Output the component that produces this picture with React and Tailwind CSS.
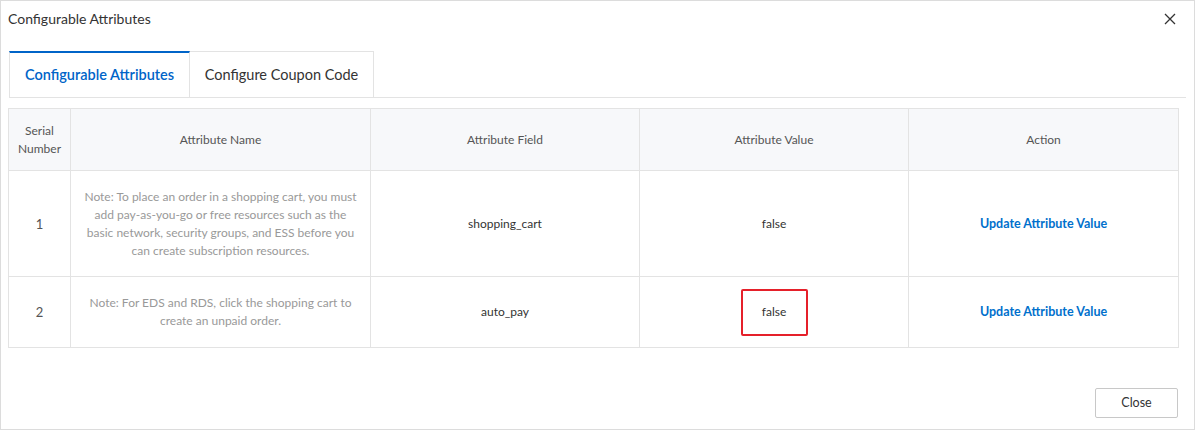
import React from "react";

const rows = [
  {
    id: 1,
    note: "Note: To place an order in a shopping cart, you must add pay-as-you-go or free resources such as the basic network, security groups, and ESS before you can create subscription resources.",
    field: "shopping_cart",
    value: "false",
  },
  {
    id: 2,
    note: "Note: For EDS and RDS, click the shopping cart to create an unpaid order.",
    field: "auto_pay",
    value: "false",
    marked: true,
  },
];

const App = () => {
  return (
    <div
      className="w-[1195px] h-[430px] bg-white border border-[#dcdcdc] relative text-[#333]"
      style={{ fontFamily: 'Lato, "Open Sans", sans-serif' }}
    >
      <div className="flex items-center justify-between h-[35px] pl-[7px] pr-[16px]">
        <span className="text-[14px] text-[#333]">Configurable Attributes</span>
        <svg width="12" height="12" viewBox="0 0 12 12" className="mr-[2px]">
          <path d="M1 1 L11 11 M11 1 L1 11" stroke="#333" strokeWidth="1.3" />
        </svg>
      </div>

      <div className="mt-[15px] ml-[8px] mr-[8px] flex border-b border-[#e3e3e3]">
        <div className="w-[181px] h-[46px] flex items-center justify-center border-t-2 border-[#0064c8] border-r border-l border-l-[#e3e3e3] border-r-[#e3e3e3] bg-white -mb-px text-[14.5px] font-semibold text-[#0064c8]">
          Configurable Attributes
        </div>
        <div className="w-[184px] h-[46px] flex items-center justify-center border-t border-r border-[#e3e3e3] text-[14.5px] text-[#333]">
          Configure Coupon Code
        </div>
      </div>

      <table className="mt-[10px] ml-[7px] w-[1170px] border-collapse text-[12px] leading-[18px] table-fixed">
        <colgroup>
          <col className="w-[62px]" />
          <col className="w-[300px]" />
          <col className="w-[269px]" />
          <col className="w-[269px]" />
          <col className="w-[270px]" />
        </colgroup>
        <thead>
          <tr className="h-[62px] bg-[#f7f8fa]">
            <th className="border border-[#e3e3e3] font-normal text-[#555] px-1">Serial Number</th>
            <th className="border border-[#e3e3e3] font-normal text-[#555]">Attribute Name</th>
            <th className="border border-[#e3e3e3] font-normal text-[#555]">Attribute Field</th>
            <th className="border border-[#e3e3e3] font-normal text-[#555]">Attribute Value</th>
            <th className="border border-[#e3e3e3] font-normal text-[#555]">Action</th>
          </tr>
        </thead>
        <tbody>
          {rows.map((r) => (
            <tr key={r.id} className={r.marked ? "h-[71px]" : "h-[106px]"}>
              <td className="border border-[#e3e3e3] text-center text-[#555] text-[13px]">{r.id}</td>
              <td className="border border-[#e3e3e3] text-center text-[#999] px-[10px]">{r.note}</td>
              <td className="border border-[#e3e3e3] text-center text-[#333]">{r.field}</td>
              <td className="border border-[#e3e3e3] text-center text-[#333]">
                {r.marked ? (
                  <span className="inline-flex items-center justify-center w-[67px] h-[47px] border-2 border-[#e5202a] rounded-[2px]">
                    {r.value}
                  </span>
                ) : (
                  r.value
                )}
              </td>
              <td className="border border-[#e3e3e3] text-center">
                <span className="text-[#0070cc] font-bold text-[12.5px]">Update Attribute Value</span>
              </td>
            </tr>
          ))}
        </tbody>
      </table>

      <div className="absolute right-[16px] bottom-[11px]">
        <button className="w-[83px] h-[30px] border border-[#c8c8c8] rounded-[2px] text-[12.5px] text-[#333] bg-white">
          Close
        </button>
      </div>
    </div>
  );
};

export default App;
